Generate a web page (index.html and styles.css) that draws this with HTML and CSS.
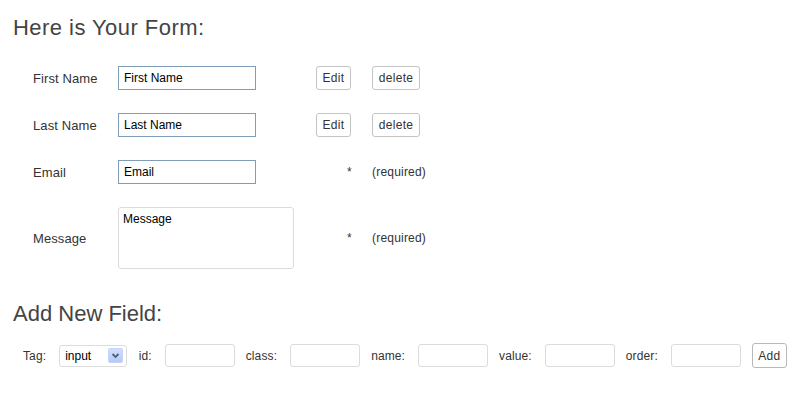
FILE: index.html
```html
<!DOCTYPE html>
<html>
<head>
<meta charset="utf-8">
<link rel="stylesheet" href="styles.css">
</head>
<body>
<div class="page">
  <h1 class="title">Here is Your Form:</h1>
  <div class="form-grid">
    <div class="lbl">First Name</div>
    <div><input class="txt" type="text" value="First Name"></div>
    <div><button class="btn btn-edit">Edit</button></div>
    <div><button class="btn btn-del">delete</button></div>

    <div class="lbl">Last Name</div>
    <div><input class="txt" type="text" value="Last Name"></div>
    <div><button class="btn btn-edit">Edit</button></div>
    <div><button class="btn btn-del">delete</button></div>

    <div class="lbl">Email</div>
    <div><input class="txt" type="text" value="Email"></div>
    <div class="star">*</div>
    <div class="req">(required)</div>

    <div class="lbl">Message</div>
    <div><textarea class="area">Message</textarea></div>
    <div class="star">*</div>
    <div class="req">(required)</div>
  </div>

  <h1 class="title title-add">Add New Field:</h1>
  <div class="add-row">
    <span class="alabel">Tag:</span>
    <span class="select-wrap">
      <select class="sel"><option>input</option><option>textarea</option></select>
      <svg class="sel-arrow" width="15" height="15" viewBox="0 0 15 15">
        <defs>
          <linearGradient id="g" x1="0" y1="0" x2="0" y2="1">
            <stop offset="0" stop-color="#d4e0fb"/>
            <stop offset="1" stop-color="#b4c8f6"/>
          </linearGradient>
        </defs>
        <rect x="0.5" y="0.5" width="14" height="14" rx="1.5" fill="url(#g)" stroke="#c3d3fd"/>
        <path d="M4.5 6 L7.5 9 L10.5 6" fill="none" stroke="#4d6185" stroke-width="1.8"/>
      </svg>
    </span>
    <span class="alabel">id:</span>
    <input class="small" type="text">
    <span class="alabel">class:</span>
    <input class="small" type="text">
    <span class="alabel">name:</span>
    <input class="small" type="text">
    <span class="alabel">value:</span>
    <input class="small" type="text">
    <span class="alabel">order:</span>
    <input class="small" type="text">
    <button class="btn btn-add">Add</button>
  </div>
</div>
</body>
</html>
```

FILE: styles.css
```css
html, body {
  margin: 0;
  padding: 0;
  background: #fff;
}
body {
  font-family: "Liberation Sans", Arial, sans-serif;
  color: #333;
}
.page {
  padding-left: 13px;
}
.title {
  margin: 15px 0 0;
  font-size: 22px;
  line-height: 25px;
  font-weight: normal;
  letter-spacing: 0.45px;
  color: #444;
}
.title-add {
  margin-top: 32px;
  letter-spacing: 0;
}
.form-grid {
  margin: 26px 0 0 20px;
  display: grid;
  grid-template-columns: 85px 198px 56px auto;
  row-gap: 23px;
  align-items: center;
}
.form-grid > div {
  display: flex;
  align-items: center;
}
.lbl {
  font-size: 13px;
  letter-spacing: 0.1px;
  color: #333;
}
.txt {
  box-sizing: border-box;
  width: 138px;
  height: 24px;
  margin: 0;
  padding: 0 5px;
  border: 1px solid #7f9db9;
  border-radius: 0;
  font-family: "Liberation Sans", Arial, sans-serif;
  font-size: 12px;
  color: #000;
  background: #fff;
  outline: none;
}
.area {
  box-sizing: border-box;
  width: 176px;
  height: 62px;
  margin: 0;
  padding: 4px 4px;
  border: 1px solid #dcdcdc;
  border-radius: 3px;
  font-family: "Liberation Sans", Arial, sans-serif;
  font-size: 12px;
  line-height: 15px;
  color: #000;
  resize: none;
  outline: none;
}
.btn {
  box-sizing: border-box;
  height: 24px;
  margin: 0;
  padding: 0;
  border: 1px solid #c4c4c4;
  border-radius: 3px;
  background: #fff;
  font-family: "Liberation Sans", Arial, sans-serif;
  font-size: 12px;
  letter-spacing: 0.3px;
  color: #333;
}
.btn-edit {
  width: 35px;
}
.btn-del {
  width: 48px;
}
.star {
  padding-left: 31px;
  font-size: 12px;
  color: #333;
}
.req {
  font-size: 12px;
  letter-spacing: 0.2px;
  color: #333;
}
.add-row {
  margin: 17px 0 0 10px;
  display: flex;
  align-items: center;
  height: 25px;
}
.alabel {
  font-size: 12px;
  letter-spacing: 0.12px;
  color: #333;
  margin-right: 13px;
}
.select-wrap {
  position: relative;
  display: inline-block;
  width: 68px;
  height: 22px;
  margin-right: 11.5px;
}
.sel {
  appearance: none;
  -webkit-appearance: none;
  box-sizing: border-box;
  width: 68px;
  height: 22px;
  margin: 0;
  padding: 0 0 0 5px;
  border: 1px solid #dcdcdc;
  border-radius: 3px;
  background: #fff;
  font-family: "Liberation Sans", Arial, sans-serif;
  font-size: 12px;
  color: #000;
  outline: none;
}
.sel-arrow {
  position: absolute;
  left: 49px;
  top: 3px;
  pointer-events: none;
}
.small {
  box-sizing: border-box;
  width: 70px;
  height: 23px;
  margin: 0 11px 0 0;
  padding: 0 4px;
  border: 1px solid #dcdcdc;
  border-radius: 3px;
  background: #fff;
  outline: none;
}
.btn-add {
  height: 25px;
  width: 35px;
  padding: 0;
  font-size: 12px;
  border-color: #b8b8b8;
}
```
